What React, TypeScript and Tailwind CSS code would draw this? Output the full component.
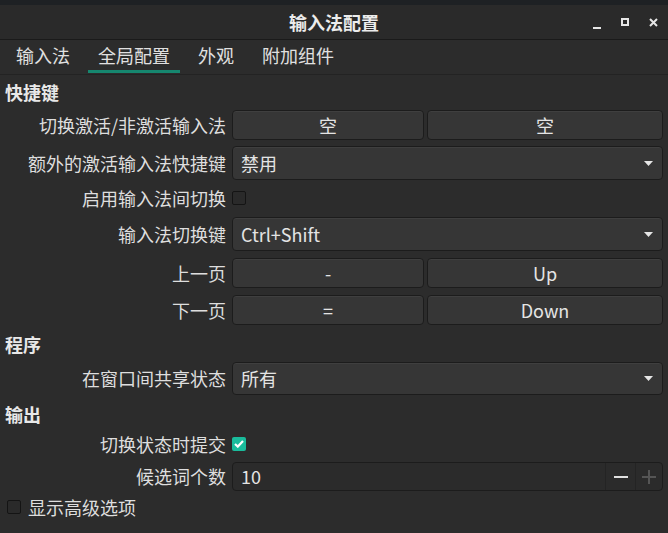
import { ReactNode } from 'react';

const font = { fontFamily: '"Noto Sans CJK SC", "Noto Sans", sans-serif' };

type RowProps = { label: string; className: string; children: ReactNode };

// label column ends at x=226, controls start at x=232
const Row = ({ label, className, children }: RowProps) => (
	<div className={`flex pl-[5px] pr-[5px] ${className}`}>
		<div className="flex w-[221px] items-center justify-end text-[18px] text-[#dedede] whitespace-nowrap">{label}</div>
		<div className="ml-[6px] flex flex-1">{children}</div>
	</div>
);

const Button = ({ children }: { children: ReactNode }) => (
	<div className="flex items-center justify-center rounded-[4px] border border-[#1c1c1c] bg-[#363636] text-[18px] text-[#e4e4e4] shadow-[inset_0_1px_0_#3f3f3f]">
		{children}
	</div>
);

const Pair = ({ a, b }: { a: string; b: string }) => (
	<div className="grid flex-1 grid-cols-[192px_1fr] gap-[3px]">
		<Button>{a}</Button>
		<Button>{b}</Button>
	</div>
);

const Combo = ({ value }: { value: string }) => (
	<div className="flex flex-1 items-center justify-between rounded-[4px] border border-[#1c1c1c] bg-[#363636] pl-[8px] pr-[9px] text-[18px] text-[#e4e4e4] shadow-[inset_0_1px_0_#3f3f3f]">
		<span>{value}</span>
		<svg width="9" height="5" viewBox="0 0 9 5">
			<path d="M0 0h9L4.5 5z" fill="#e6e6e6" />
		</svg>
	</div>
);

const Check = ({ checked }: { checked?: boolean }) =>
	checked ? (
		<div className="flex h-[14px] w-[14px] items-center justify-center rounded-[2px] bg-[#1abc9c]">
			<svg width="10" height="8" viewBox="0 0 10 8">
				<path d="M1 4l2.8 2.6L9 1" stroke="#fff" strokeWidth="2.2" fill="none" />
			</svg>
		</div>
	) : (
		<div className="h-[14px] w-[14px] rounded-[2px] border border-[#141414] bg-[#2a2a2a]" />
	);

const Heading = ({ children, className }: { children: ReactNode; className: string }) => (
	<div className={`flex h-[26px] items-center pl-[5px] text-[18px] font-bold text-[#e8e8e8] ${className}`}>{children}</div>
);

export default function App() {
	return (
		<div className="flex h-[533px] w-[668px] flex-col overflow-hidden bg-[#2c2c2c]" style={font}>
			<div className="h-[5px] bg-[#1e2124]" />
			{/* title bar */}
			<div className="relative flex h-[35px] items-center justify-center border-b border-[#1a1a1a] bg-[#2a2a2a]">
				<span className="text-[18px] font-bold text-[#ececec]">输入法配置</span>
				<div className="absolute right-[10px] top-0 flex h-full items-center gap-[20px]">
					<div className="mt-[12px] h-[2px] w-[8px] bg-[#e6e6e6]" />
					<div className="h-[8px] w-[8px] border-2 border-[#e6e6e6]" />
					<svg width="9" height="9" viewBox="0 0 9 9">
						<path d="M1 1l7 7M8 1l-7 7" stroke="#e6e6e6" strokeWidth="2" />
					</svg>
				</div>
			</div>
			{/* tabs */}
			<div className="flex h-[35px] items-stretch border-b border-[#232323] bg-[#2c2c2c] pl-[2px] text-[18px] text-[#e0e0e0]">
				{['输入法', '全局配置', '外观', '附加组件'].map((t, i) => (
					<div key={t} className="relative flex items-center px-[14px] pb-[4px]">
						{t}
						{i === 1 ? <div className="absolute bottom-[1px] left-[4px] right-[4px] h-[3px] bg-[#16876f]" /> : null}
					</div>
				))}
			</div>

			<Heading className="mt-[4px]">快捷键</Heading>
			<Row label="切换激活/非激活输入法" className="mt-[5px] h-[30px]">
				<Pair a="空" b="空" />
			</Row>
			<Row label="额外的激活输入法快捷键" className="mt-[6px] h-[34px]">
				<Combo value="禁用" />
			</Row>
			<Row label="启用输入法间切换" className="mt-[4px] h-[28px]">
				<div className="flex items-center">
					<Check />
				</div>
			</Row>
			<Row label="输入法切换键" className="mt-[5px] h-[34px]">
				<Combo value="Ctrl+Shift" />
			</Row>
			<Row label="上一页" className="mt-[7px] h-[30px]">
				<Pair a="-" b="Up" />
			</Row>
			<Row label="下一页" className="mt-[7px] h-[30px]">
				<Pair a="=" b="Down" />
			</Row>

			<Heading className="mt-[6px]">程序</Heading>
			<Row label="在窗口间共享状态" className="mt-[5px] h-[33px]">
				<Combo value="所有" />
			</Row>

			<Heading className="mt-[6px]">输出</Heading>
			<Row label="切换状态时提交" className="mt-[6px] h-[22px]">
				<div className="flex items-center">
					<Check checked />
				</div>
			</Row>
			<Row label="候选词个数" className="mt-[7px] h-[29px]">
				<div className="flex flex-1 items-stretch overflow-hidden rounded-[4px] border border-[#1c1c1c] bg-[#2b2b2b] text-[18px] text-[#e4e4e4]">
					<div className="flex flex-1 items-center pl-[8px]">10</div>
					<div className="flex w-[30px] items-center justify-center border-l border-[#242424]">
						<div className="h-[2px] w-[14px] bg-[#e0e0e0]" />
					</div>
					<div className="flex w-[27px] items-center justify-center border-l border-[#242424]">
						<svg width="14" height="14" viewBox="0 0 14 14">
							<path d="M7 0v14M0 7h14" stroke="#555" strokeWidth="2" />
						</svg>
					</div>
				</div>
			</Row>
			<div className="mt-[5px] flex h-[22px] items-center gap-[7px] pl-[7px] text-[18px] text-[#dedede]">
				<Check />
				<span>显示高级选项</span>
			</div>
		</div>
	);
}
